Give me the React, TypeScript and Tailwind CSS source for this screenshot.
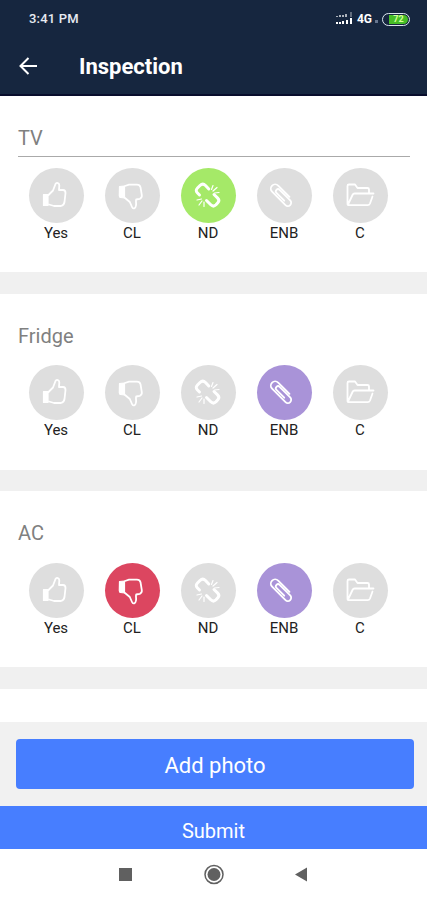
import type { ReactNode } from 'react';

type Option = { label: string; active: string; icon: ReactNode };

const options: Option[] = [
  {
    label: 'Yes',
    active: 'bg-[#5b9bf0]',
    icon: (
      <>
        <path d="M14.500 26.500h4.500v11h-4.500z" fill="currentColor" strokeWidth="1.200" />
        <path d="M19.500 27l4.500-4.500 2.500-6.500c1-2 4-1 3.800 1.500L30 22h4c2 0 2.500 1.500 2.500 3L35.500 34c-.3 2-1.500 3.500-3.500 4h-7l-5-1.500" />
      </>
    ),
  },
  {
    label: 'CL',
    active: 'bg-[#dc4660]',
    icon: (
      <>
        <path d="M14.500 18.500l5-.5v12l-4-.5c-1 0-1.200-1-1.200-2z" fill="currentColor" strokeWidth="1.200" />
        <path d="M20 18l4-1.300h8c2 0 3 .8 3.500 2.500l1.300 8c.3 2-.5 3-2 3.600l-3.600.7c-.7 2 .3 3.500-.2 6-.4 3-3 4-4 1.500l-2.200-5L20 30" />
      </>
    ),
  },
  {
    label: 'ND',
    active: 'bg-[#a5e968]',
    icon: (
      <>
        <path d="M18.500 27l-2-2c-1.800-1.800-1.500-3.500 0-5l2.500-2.500c1.800-1.700 3.800-1.700 5.500 0l3.300 3.500" strokeWidth="3" />
        <path d="M25.500 32.500l4.300 4.300c1.700 1.700 3.700 1.500 5.200 0l1.800-2c1.500-1.700 1.300-3.500-.3-5L33 26.500" strokeWidth="3" />
        <path d="M20.500 31l-4.500 1M21 33l-3 4M23 34v4.500M30.500 21.500l1.500-4M32 23l4-3.500M33.500 25l4.500-.5" strokeWidth="1.200" />
      </>
    ),
  },
  {
    label: 'ENB',
    active: 'bg-[#a993d8]',
    icon: (
      <path
        d="M7-4.300H-9a4.300 4.300 0 0 0 0 8.600H10a3.300 3.300 0 0 0 0-6.600H-5a2.200 2.200 0 0 0 0 4.400H6"
        transform="translate(24.500 27) rotate(45)"
        strokeWidth="1.800"
      />
    ),
  },
  {
    label: 'C',
    active: 'bg-[#f0b75b]',
    icon: (
      <path
        d="M14.500 35.500V18c0-1 .5-1.500 1.500-1.500h6l2.500 3.500H34.500c1 0 1.500.5 1.500 1.500V25M15 36.500l4.500-9.500c.5-1 1-1.500 2-1.500H40.500M39.500 28.500L37 35.500c-.5 1.200-1 1.700-2.300 1.700H16c-1 0-1.500-.7-1.500-1.700"
        strokeWidth="1.800"
      />
    ),
  },
];

const rooms = [
  { name: 'TV', selected: ['ND'], focused: true },
  { name: 'Fridge', selected: ['ENB'], focused: false },
  { name: 'AC', selected: ['CL', 'ENB'], focused: false },
];

function StatusBar() {
  return (
    <div className="flex h-[38px] items-center justify-between pr-[17px] pl-[29px] text-white">
      <span className="text-[13px] font-medium tracking-[0.2px] text-[#e8ebf2]">3:41 PM</span>
      <div className="flex items-center">
        <svg width="17" height="14" viewBox="0 0 17 14" fill="currentColor">
          <path d="M0 4h2v1H0zM3 3h2v2H3zM6 3h2v2H6zM9 2h2v3H9zM14.500 0h1v5h-1z" opacity=".65" />
          <path d="M0 10h2v2H0zM3 10h2v2H3zM6 9h2v3H6zM10 8h2v4h-2zM14 6h2v6h-2z" />
        </svg>
        <span className="ml-[4px] text-[12px] font-bold">4G</span>
        <span className="mt-1 ml-[3px] h-[3px] w-[3px] bg-[#66758f]" />
        <div className="ml-[4px] flex h-[13px] w-[28px] rounded-full border-[1.5px] border-[#dce6ef] p-px">
          <div className="ml-[5px] flex flex-1 items-center justify-center rounded-r-full bg-[#46bd26] text-[9px] leading-none font-bold text-[#d4ff9b]">
            72
          </div>
        </div>
      </div>
    </div>
  );
}

function Card({ name, selected, focused }: { name: string; selected: string[]; focused: boolean }) {
  return (
    <section className="h-[176px] shrink-0 bg-white pt-[29px]">
      <div
        className={`mr-[17px] ml-[18px] flex h-[32px] border-b ${focused ? 'border-[#aaa]' : 'border-transparent'}`}
      >
        <h2 className="text-[20px] leading-[27px] text-[#808080]">{name}</h2>
      </div>
      <div className="mt-[10.500px] flex pl-[18px]">
        {options.map((option) => (
          <div key={option.label} className="flex w-[76px] flex-col items-center">
            <div
              className={`h-[55px] w-[55px] rounded-full text-white ${
                selected.includes(option.label) ? option.active : 'bg-[#dedede]'
              }`}
            >
              <svg
                viewBox="0 0 55 55"
                fill="none"
                stroke="currentColor"
                strokeWidth="1.800"
                strokeLinejoin="round"
                strokeLinecap="round"
              >
                {option.icon}
              </svg>
            </div>
            <span className="text-[15px] leading-[20px] text-[#222]">{option.label}</span>
          </div>
        ))}
      </div>
    </section>
  );
}

export default function App() {
  return (
    <div className="flex h-[900px] w-[427px] flex-col overflow-hidden bg-white font-[Roboto,sans-serif]">
      <header className="h-[96px] shrink-0 border-b-2 border-[#080d2c] bg-[#16263f] text-white">
        <StatusBar />
        <div className="flex h-[56px] items-center pl-[19px]">
          <svg width="19" height="18" viewBox="0 0 19 18" fill="none" stroke="currentColor" strokeWidth="2">
            <path d="M18 9H2M9.500 1L1.500 9l8 8" />
          </svg>
          <h1 className="ml-[41px] text-[22px] font-bold">Inspection</h1>
        </div>
      </header>
      <main className="flex min-h-0 flex-1 flex-col gap-[21.500px] overflow-hidden bg-[#f0f0f0]">
        {rooms.map((room) => (
          <Card key={room.name} {...room} />
        ))}
        <div className="h-[60px] shrink-0 bg-white" />
      </main>
      <div className="h-[84px] shrink-0 bg-[#f1f1f1] pt-[17px] pr-[13px] pl-[16px]">
        <button className="h-[50px] w-full rounded-[4px] bg-[#477eff] pt-[3px] text-[22px] text-white">
          Add photo
        </button>
      </div>
      <button className="h-[43px] shrink-0 bg-[#477eff] pt-[6px] text-[20px] text-white">Submit</button>
      <nav className="flex h-[51px] shrink-0 text-[#606060]">
        <svg width="427" height="51" viewBox="0 0 427 51" fill="currentColor">
          <path d="M119 19h13v13h-13zM307 18.500v14L295 25.500z" />
          <circle cx="214" cy="25.500" r="6.500" />
          <circle cx="214" cy="25.500" r="9" fill="none" stroke="currentColor" strokeWidth="1.500" />
        </svg>
      </nav>
    </div>
  );
}
